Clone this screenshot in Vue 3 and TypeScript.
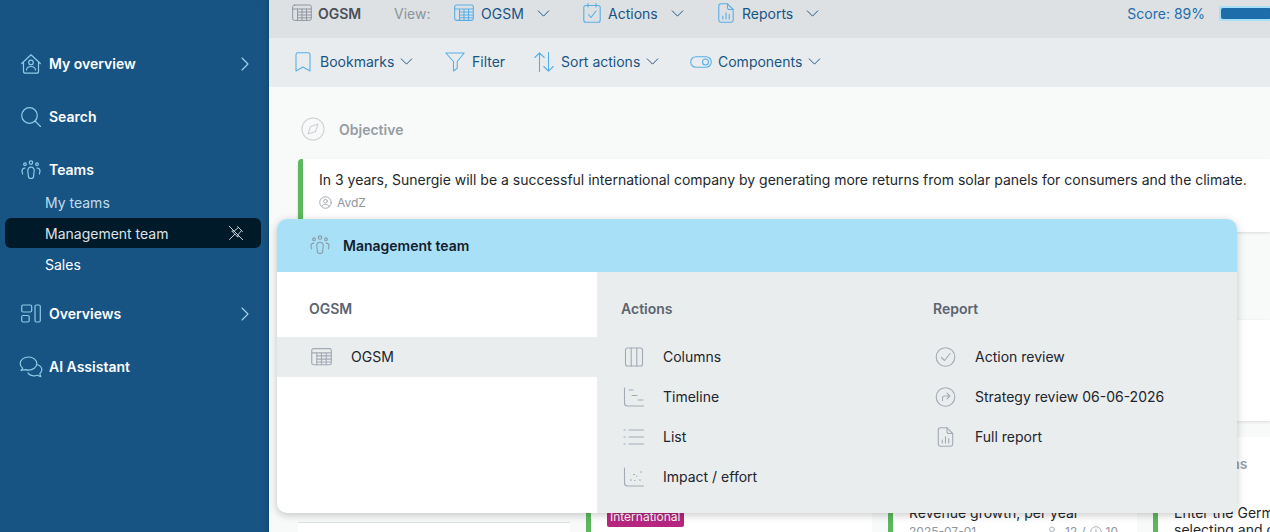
<template>
  <div class="app">
    <aside class="sidebar">
      <nav class="nav">
        <div class="nav-row">
          <svg class="nav-icon" viewBox="0 0 20 20"><path d="M.7 9.500 10 .8l9.300 8.700M2.500 8v9.200a2 2 0 0 0 2 2h11a2 2 0 0 0 2-2V8" /><circle cx="10" cy="8.400" r="2.300" /><path d="M5.500 15.800c.3-2.300 2-3.300 4.500-3.300s4.200 1 4.500 3.300" /></svg>
          <span>My overview</span>
          <svg class="nav-chevron" viewBox="0 0 8 14"><path d="m1 1 6 6-6 6" /></svg>
        </div>
        <div class="nav-row">
          <svg class="nav-icon" viewBox="0 0 20 20"><circle cx="8.500" cy="8.500" r="7.800" /><path d="m14 14 5.500 5.500" /></svg>
          <span>Search</span>
        </div>
        <div class="nav-row">
          <svg class="nav-icon" viewBox="0 0 20 20"><use href="#team-icon" /></svg>
          <span>Teams</span>
        </div>
        <div class="sub-list">
          <div class="sub-row muted">My teams</div>
          <div class="sub-row active">
            <span>Management team</span>
            <svg class="unpin" viewBox="0 0 16 16"><path d="M9.500 1.500 14.500 6.500M10.500 2.500 6.500 5.800 3.800 6.100 9.900 12.200 10.200 9.500 13.500 5.500M6.800 9.200 1.500 14.500M1.200 1.200 14.800 14.800" /></svg>
          </div>
          <div class="sub-row">Sales</div>
        </div>
        <div class="nav-row overviews">
          <svg class="nav-icon" viewBox="0 0 20 20"><rect x=".7" y="1" width="10" height="7" rx="1.500" /><rect x=".7" y="11.500" width="7.500" height="6.500" rx="1.500" /><rect x="14" y="1" width="5.300" height="17" rx="1.500" /></svg>
          <span>Overviews</span>
          <svg class="nav-chevron" viewBox="0 0 8 14"><path d="m1 1 6 6-6 6" /></svg>
        </div>
        <div class="nav-row">
          <svg class="nav-icon chat" viewBox="0 0 24 22"><path d="M9.500 1C5 1 1.200 3.800 1.200 7.500c0 2 1 3.600 2.500 4.800L2 14.500l4.200-.9c1 .3 2.100.5 3.300.5 4.500 0 8.300-2.900 8.300-6.600S14 1 9.500 1Z" /><path d="M18.500 8.800c2.500.9 4.300 2.800 4.300 5 0 1.500-.8 2.800-2 3.800l1 3-3.500-1.300c-1 .4-2 .6-3.100.6-2.700 0-5-1.200-6.200-3" /></svg>
          <span>AI Assistant</span>
        </div>
      </nav>
    </aside>

    <main class="main">
      <svg class="defs" width="0" height="0">
        <symbol id="team-icon" viewBox="0 0 20 20">
          <circle cx="10" cy="2.600" r="1.700" /><circle cx="4" cy="4.200" r="1.300" /><circle cx="16" cy="4.200" r="1.300" />
          <path d="M7.400 16.500 6.800 11c-.3-2.200 1-3.800 3.200-3.800s3.500 1.600 3.200 3.800l-.6 5.500c-.1 1.300-1 2-2.600 2s-2.500-.7-2.600-2Z" />
          <path d="M4 8c-1.900.2-3 1.400-3 3 0 1 .4 1.500.6 2.800M16 8c1.900.2 3 1.400 3 3 0 1-.4 1.500-.6 2.800" />
        </symbol>
        <symbol id="grid-icon" viewBox="0 0 20 18">
          <rect x=".7" y="1" width="18.600" height="15.400" rx="1.800" />
          <path d="M.7 5h18.600M5.500 8h13.800M5.500 11h13.800M5.500 13.800h13.800M5.500 5v11.400M10 5v11.400M14.500 5v11.400" />
        </symbol>
        <symbol id="report-icon" viewBox="0 0 16 20">
          <path d="M9.500.8H3A2.200 2.200 0 0 0 .8 3v14A2.200 2.200 0 0 0 3 19.200h10a2.200 2.200 0 0 0 2.200-2.200V6.500L9.500.8Z" /><path d="M9.500.8v3.700a2 2 0 0 0 2 2h3.700M4.800 16v-3M8 16V9.800M11.200 16v-4.500" />
        </symbol>
      </svg>

      <header class="topbar">
        <div class="crumb">
          <svg class="crumb-icon" viewBox="0 0 20 18"><use href="#grid-icon" /></svg>
          <strong>OGSM</strong>
        </div>
        <span class="view-label">View:</span>
        <div class="tool view-ogsm">
          <svg class="tool-icon" viewBox="0 0 20 18"><use href="#grid-icon" /></svg>
          <span>OGSM</span>
          <svg class="chev" viewBox="0 0 14 8"><path d="m1 1 6 6 6-6" /></svg>
        </div>
        <div class="tool view-actions">
          <svg class="tool-icon" viewBox="0 0 18 20"><rect x=".8" y="2.500" width="16.400" height="16.700" rx="2" /><path d="M5 .5v3.500M13 .5v3.500M5.500 11.500l2.500 3 5-6.500" /></svg>
          <span>Actions</span>
          <svg class="chev" viewBox="0 0 14 8"><path d="m1 1 6 6 6-6" /></svg>
        </div>
        <div class="tool view-reports">
          <svg class="tool-icon" viewBox="0 0 16 20"><use href="#report-icon" /></svg>
          <span>Reports</span>
          <svg class="chev" viewBox="0 0 14 8"><path d="m1 1 6 6 6-6" /></svg>
        </div>
        <div class="score">
          <span>Score: 89%</span>
          <div class="score-bar"><div class="score-fill" :style="{ width: score + '%' }"></div></div>
        </div>
      </header>

      <div class="toolbar">
        <div class="tool bookmarks">
          <svg class="tool-icon" viewBox="0 0 16 20"><path d="M1 2.500A1.800 1.800 0 0 1 2.800.8h10.400A1.800 1.800 0 0 1 15 2.500v16.500l-7-4-7 4V2.500Z" /></svg>
          <span>Bookmarks</span>
          <svg class="chev" viewBox="0 0 14 8"><path d="m1 1 6 6 6-6" /></svg>
        </div>
        <div class="tool filter">
          <svg class="tool-icon" viewBox="0 0 20 20"><path d="M.8 1h18.400l-7 8.500v6.700L8.500 19V9.500L.8 1Z" /></svg>
          <span>Filter</span>
        </div>
        <div class="tool sort">
          <svg class="tool-icon" viewBox="0 0 20 20"><path d="M5.500 19.500V.8M.8 5.500 5.500.8l4.700 4.700M14.500.5v18.700M9.800 14.500l4.700 4.700 4.700-4.700" /></svg>
          <span>Sort actions</span>
          <svg class="chev" viewBox="0 0 14 8"><path d="m1 1 6 6 6-6" /></svg>
        </div>
        <div class="tool components">
          <svg class="toggle" viewBox="0 0 22 12"><rect x=".7" y=".7" width="20.600" height="10.600" rx="5.300" /><circle cx="15.500" cy="6" r="3" /></svg>
          <span>Components</span>
          <svg class="chev" viewBox="0 0 14 8"><path d="m1 1 6 6 6-6" /></svg>
        </div>
      </div>

      <div class="content">
        <div class="section-head">
          <span class="compass">
            <svg viewBox="0 0 24 24"><circle cx="12" cy="12" r="11" /><path d="M17 7 14.500 14.500 7 17l2.500-7.500L17 7Z" /></svg>
          </span>
          <span>Objective</span>
        </div>
        <div class="objective">
          <p>In 3 years, Sunergie will be a successful international company by generating more returns from solar panels for consumers and the climate.</p>
          <div class="owner">
            <svg viewBox="0 0 14 14"><circle cx="7" cy="7" r="6.200" /><circle cx="7" cy="5.600" r="2" /><path d="M3 11.300c.6-1.600 2-2.200 4-2.200s3.400.6 4 2.200" /></svg>
            <span>AvdZ</span>
          </div>
        </div>

        <div class="goal-panel"></div>

        <div class="board">
          <div class="board-col first">
            <div class="first-row"></div>
          </div>
          <div class="board-col second">
            <div class="card">
              <span class="tag">International</span>
            </div>
          </div>
          <div class="board-col third">
            <div class="card">
              <p>Revenue growth, per year</p>
              <div class="meta">
                <span>2025-07-01</span>
                <span class="meta-counts">
                  <svg viewBox="0 0 12 14"><circle cx="6" cy="4" r="2.800" /><path d="M1 13c.3-3 2.200-4.500 5-4.500s4.700 1.500 5 4.500" /></svg>
                  <span>12</span>
                  <span>/</span>
                  <svg viewBox="0 0 14 14"><circle cx="7" cy="7" r="6.200" /><path d="M7 3.500V7l2.500 1.500" /></svg>
                  <span>10</span>
                </span>
              </div>
            </div>
          </div>
          <div class="board-col fourth">
            <span class="col-title">Actions</span>
            <div class="card">
              <p>Enter the German market by<br />selecting and contracting</p>
            </div>
          </div>
        </div>
      </div>

      <section class="popup">
        <div class="popup-head">
          <svg viewBox="0 0 20 20"><use href="#team-icon" /></svg>
          <span>Management team</span>
        </div>
        <div class="popup-body">
          <div class="popup-ogsm">
            <h4>OGSM</h4>
            <div class="menu-row selected">
              <svg class="menu-icon" viewBox="0 0 20 18"><use href="#grid-icon" /></svg>
              <span>OGSM</span>
            </div>
          </div>
          <div class="popup-links">
            <div class="link-col">
              <h4>Actions</h4>
              <div v-for="item in actionItems" :key="item.label" class="menu-row">
                <svg class="menu-icon" viewBox="0 0 20 20" v-html="item.icon"></svg>
                <span>{{ item.label }}</span>
              </div>
            </div>
            <div class="link-col">
              <h4>Report</h4>
              <div v-for="item in reportItems" :key="item.label" class="menu-row">
                <svg class="menu-icon" viewBox="0 0 20 20" v-html="item.icon"></svg>
                <span>{{ item.label }}</span>
              </div>
            </div>
          </div>
        </div>
      </section>
    </main>
  </div>
</template>

<script setup lang="ts">
interface MenuItem {
  label: string
  icon: string
}

const score = 89

const actionItems: MenuItem[] = [
  { label: 'Columns', icon: '<rect x="2" y="1" width="17" height="18" rx="2"/><path d="M7.700 1v18M13.300 1v18"/>' },
  { label: 'Timeline', icon: '<path d="M1 1v15a3 3 0 0 0 3 3h16M5.500 3h4M8.500 8.500h5M14.500 13h5"/>' },
  { label: 'List', icon: '<path d="M5.500 3H20M5.500 10H20M5.500 17H20M.5 3h1.200M.5 10h1.200M.5 17h1.200"/>' },
  { label: 'Impact / effort', icon: '<path d="M1 1v15a3 3 0 0 0 3 3h16M7 13h1M16 13h1M10 7.500h1M17 5h1M11 13.500h.5M13 9h.5"/>' }
]

const reportItems: MenuItem[] = [
  { label: 'Action review', icon: '<circle cx="10" cy="10" r="9.300"/><path d="m6 10.500 3 3 5.500-7"/>' },
  { label: 'Strategy review 06-06-2026', icon: '<circle cx="10" cy="10" r="9.300"/><path d="M7 13.500V11a2 2 0 0 1 2-2h5M11.500 6.200 14.300 9l-2.800 2.800"/>' },
  { label: 'Full report', icon: '<g transform="translate(2 0)"><path d="M9.500.8H3A2.200 2.200 0 0 0 .8 3v14A2.200 2.200 0 0 0 3 19.200h10a2.200 2.200 0 0 0 2.200-2.200V6.500L9.500.8Z"/><path d="M9.500.8v3.700a2 2 0 0 0 2 2h3.700M4.800 16v-3M8 16V9.800M11.200 16v-4.500"/></g>' }
]
</script>

<style>
html,
body {
  margin: 0;
  overflow: hidden;
}
</style>

<style scoped>
.app {
  display: flex;
  width: 1270px;
  height: 532px;
  overflow: hidden;
  font-family: Inter, "Liberation Sans", sans-serif;
  font-size: 14px;
  background: #f8f9f9;
}

svg {
  fill: none;
  stroke-linecap: round;
  stroke-linejoin: round;
}

.defs {
  position: absolute;
}

.sidebar {
  flex: 0 0 269px;
  height: 532px;
  background: #175484;
  box-shadow: inset -6px 0 6px -6px rgba(0, 0, 0, 0.25);
  color: #fff;
  box-sizing: border-box;
  padding: 37px 0 0 5px;
}

.nav-row {
  display: flex;
  align-items: center;
  height: 53px;
  padding-left: 16px;
  font-weight: 600;
  position: relative;
}

.nav-icon {
  width: 20px;
  height: 20px;
  margin-right: 8px;
  stroke: #8fcbe6;
  stroke-width: 1.2;
}

.nav-icon.chat {
  width: 24px;
  height: 22px;
  margin: 0 6px 0 -2px;
}

.nav-chevron {
  position: absolute;
  left: 236px;
  width: 8px;
  height: 14px;
  stroke: #a7d5ec;
  stroke-width: 1.1;
}

.sub-list {
  margin-top: -9px;
}

.sub-row {
  display: flex;
  align-items: center;
  justify-content: space-between;
  width: 256px;
  height: 30px;
  margin-bottom: 1px;
  padding: 0 17px 0 40px;
  box-sizing: border-box;
  border-radius: 6px;
  font-size: 14px;
  color: #fff;
}

.sub-row.muted {
  color: #c3dcec;
}

.sub-row.active {
  background: #011a29;
  color: #dce3e8;
}

.unpin {
  width: 16px;
  height: 16px;
  stroke: #dce3e8;
  stroke-width: 0.9;
}

.overviews {
  margin-top: 8px;
}

.main {
  flex: 1;
  min-width: 0;
  position: relative;
  display: flex;
  flex-direction: column;
}

.topbar {
  display: flex;
  align-items: center;
  height: 38px;
  flex: none;
  box-sizing: border-box;
  padding: 0 0 12px 23px;
  background: #dee1e4;
  white-space: nowrap;
}

.crumb {
  display: flex;
  align-items: center;
  gap: 6px;
  width: 102px;
  flex: none;
  color: #4a5058;
}

.crumb strong {
  font-size: 14px;
  font-weight: 600;
}

.crumb-icon {
  width: 20px;
  height: 18px;
  stroke: #8f969e;
  stroke-width: 1;
}

.view-label {
  width: 60px;
  flex: none;
  color: #8b939b;
  font-size: 14px;
}

.tool {
  display: flex;
  align-items: center;
  flex: none;
  color: #175484;
  font-size: 14px;
  white-space: nowrap;
}

.tool-icon {
  width: 20px;
  height: 20px;
  margin-right: 7px;
  stroke: #58afe6;
  stroke-width: 1.1;
}

.chev {
  width: 13px;
  height: 7px;
  margin-left: 6px;
  stroke: #175484;
  stroke-width: 1.1;
}

.topbar .chev {
  margin-left: 13px;
}

.view-ogsm {
  width: 129px;
}

.view-actions {
  width: 135px;
}

.view-actions .tool-icon {
  width: 18px;
}

.view-reports .tool-icon {
  width: 16px;
  margin-right: 8px;
}

.score {
  display: flex;
  align-items: center;
  gap: 14px;
  margin-left: auto;
  color: #1d6dab;
  font-size: 14px;
}

.score-bar {
  width: 60px;
  height: 15px;
  margin-right: -9px;
  box-sizing: border-box;
  border: 2px solid #a7e0f7;
  border-radius: 2px;
  background: #a7e0f7;
  overflow: hidden;
}

.score-fill {
  height: 100%;
  background: #1d6dab;
  border-radius: 2px;
}

.toolbar {
  display: flex;
  align-items: center;
  height: 49px;
  flex: none;
  box-sizing: border-box;
  padding: 0 0 2px 26px;
  background: #e9ecee;
}

.bookmarks {
  width: 150px;
}

.bookmarks .tool-icon {
  width: 16px;
  margin-right: 9px;
}

.filter {
  width: 89px;
}

.sort {
  width: 156px;
}

.components .toggle {
  margin-right: 6px;
}

.toggle {
  width: 22px;
  height: 12px;
  stroke: #58afe6;
  stroke-width: 1.1;
}

.content {
  flex: 1;
  min-height: 0;
  padding: 30px 0 0 29px;
  overflow: hidden;
}

.section-head {
  display: flex;
  align-items: center;
  gap: 14px;
  height: 24px;
  padding-left: 3px;
  color: #969da4;
  font-weight: 600;
  font-size: 14px;
}

.compass svg {
  display: block;
  width: 24px;
  height: 24px;
  stroke: #ced2d6;
  stroke-width: 1.1;
}

.objective {
  margin-top: 18px;
  height: 73px;
  box-sizing: border-box;
  padding: 12px 0 0 16px;
  background: #fff;
  border-left: 5px solid #5cb85c;
  border-radius: 4px 0 0 4px;
  box-shadow: 0 1px 3px rgba(0, 0, 0, 0.12);
}

.objective p {
  margin: 0;
  color: #23272b;
  font-size: 14px;
  line-height: 17px;
  white-space: nowrap;
}

.owner {
  display: flex;
  align-items: center;
  gap: 5px;
  margin-top: 7px;
  font-size: 12px;
  color: #8f969e;
}

.owner svg {
  width: 13px;
  height: 13px;
  stroke: #a2a8ae;
  stroke-width: 1;
}

.goal-panel {
  height: 101px;
  margin-top: 88px;
  background: #fff;
  box-shadow: 0 1px 3px rgba(0, 0, 0, 0.12);
}

.board {
  display: flex;
  gap: 16px;
  height: 95px;
  margin-top: 16px;
  color: #23272b;
}

.board-col {
  flex: none;
  position: relative;
  background: #fff;
  box-sizing: border-box;
}

.first {
  width: 272px;
}

.first-row {
  height: 86px;
  background: #f8f9f9;
  border-bottom: 1px solid #dee1e4;
  box-sizing: border-box;
}

.second {
  width: 286px;
  padding-top: 52px;
}

.third {
  width: 249px;
  padding-top: 52px;
}

.fourth {
  flex: 1;
  padding-top: 52px;
}

.card {
  height: 60px;
  box-sizing: border-box;
  padding: 15px 0 0 16px;
  border-left: 5px solid #5cb85c;
  white-space: nowrap;
}

.card p {
  margin: 0;
  font-size: 14px;
  line-height: 17px;
}

.second .card {
  padding-top: 0;
}

.tag {
  display: inline-block;
  margin-top: 18px;
  padding: 0 4px 0 3px;
  background: #b7267e;
  color: #fff;
  font-size: 12px;
  line-height: 20px;
  border-radius: 2px;
}

.meta {
  display: flex;
  justify-content: space-between;
  padding: 3px 19px 0 0;
  font-size: 12px;
  color: #8f969e;
}

.meta-counts {
  display: flex;
  align-items: center;
  gap: 4px;
}

.meta-counts svg {
  width: 12px;
  height: 12px;
  stroke: #a2a8ae;
  stroke-width: 1;
}

.meta-counts svg:first-child {
  margin-right: 3px;
}

.col-title {
  position: absolute;
  left: 43px;
  top: 18px;
  color: #969da4;
  font-weight: 600;
}

.popup {
  position: absolute;
  left: 8px;
  top: 219px;
  width: 960px;
  height: 294px;
  display: flex;
  flex-direction: column;
  border-radius: 10px;
  background: #fff;
  overflow: hidden;
  box-shadow: 0 2px 8px rgba(0, 0, 0, 0.22);
}

.popup-head {
  display: flex;
  align-items: center;
  gap: 13px;
  flex: none;
  height: 53px;
  padding: 0 0 1px 33px;
  box-sizing: border-box;
  background: #a7e0f7;
  color: #141d2b;
  font-weight: 600;
  font-size: 14px;
}

.popup-head svg {
  width: 20px;
  height: 20px;
  stroke: #8f99a3;
  stroke-width: 1.1;
}

.popup-body {
  flex: 1;
  display: flex;
  min-height: 0;
}

.popup-ogsm {
  flex: 0 0 320px;
  padding-top: 28px;
  box-sizing: border-box;
}

h4 {
  margin: 0 0 19px;
  height: 18px;
  line-height: 18px;
  padding-left: 32px;
  font-size: 14px;
  font-weight: 600;
  color: #5b6470;
}

.popup-links {
  flex: 1;
  display: flex;
  padding-top: 28px;
  background: #eaedee;
}

.link-col {
  flex: 0 0 312px;
}

.link-col h4 {
  padding-left: 24px;
}

.menu-row {
  display: flex;
  align-items: center;
  gap: 19px;
  height: 40px;
  padding: 0 0 1px 26px;
  box-sizing: border-box;
  color: #20242c;
  font-size: 14px;
}

.popup-ogsm .menu-row {
  padding-left: 34px;
}

.menu-row.selected {
  background: #eaedee;
}

.menu-icon {
  width: 21px;
  height: 20px;
  flex: none;
  stroke: #a3a9b5;
  stroke-width: 1.1;
}
</style>
